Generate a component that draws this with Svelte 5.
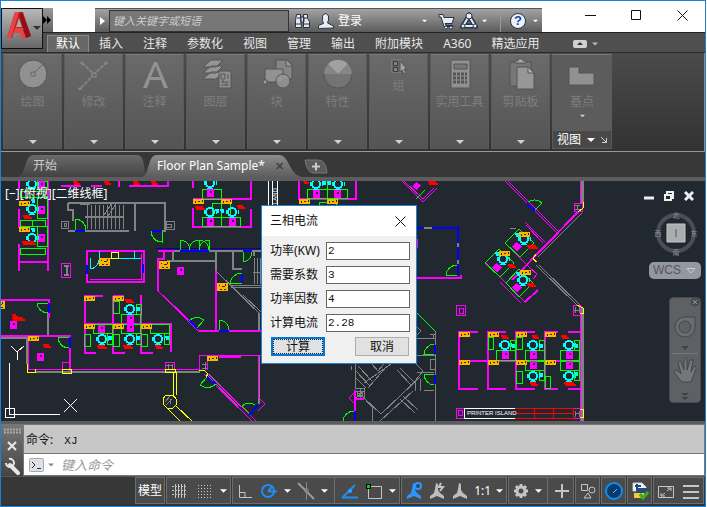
<script lang="ts">
    /**
     * CAD workspace: ribbon, drawing area, current calculator dialog,
     * command line and status bar.
     */
    const tabs = ["插入", "注释", "参数化", "视图", "管理", "输出", "附加模块", "A360", "精选应用"];

    const panels = [
        { name: "绘图", icon: "circle" },
        { name: "修改", icon: "modify" },
        { name: "注释", icon: "text" },
        { name: "图层", icon: "layers" },
        { name: "块", icon: "block" },
        { name: "特性", icon: "props" },
        { name: "组", icon: "group" },
        { name: "实用工具", icon: "calc" },
        { name: "剪贴板", icon: "clip" },
    ];

    let power = $state("2");
    let demand = $state("3");
    let factor = $state("4");
    let result = $state("2.28");
    let search = $state("");
    let command = $state("");

    function calculate() {
        const kw = Number(power) * Number(demand);
        result = (kw / (1.732 * 0.38 * Number(factor))).toFixed(2);
    }

    // drawing entities, in drawing units
    const cabinets = [
        [38, 181], [38, 206], [38, 234], [207, 189], [207, 218], [229, 218],
        [177, 267], [10, 321], [37, 353], [127, 315], [98, 325], [127, 324],
        [313, 190], [334, 190], [502, 351], [530, 351], [566, 351], [530, 361],
        [566, 361],
    ];

    const chairs = [
        [32, 209], [32, 238], [32, 184], [210, 183], [210, 212], [232, 212],
        [130, 309], [102, 339], [130, 339], [158, 339], [316, 184], [338, 184],
        [505, 345], [533, 345], [569, 345], [533, 376], [569, 376],
        [524, 239], [503, 259], [523, 280],
    ];

    const tails = [
        [217, 211], [222, 211], [138, 309], [110, 338], [138, 338], [167, 338],
        [324, 183], [329, 183], [513, 346], [541, 346], [576, 346], [541, 375],
        [576, 374], [517, 235], [497, 254], [518, 274], [33, 230], [33, 201],
    ];

    const files = [
        [19, 201], [19, 227], [193, 199], [221, 199], [84, 296], [113, 296],
        [84, 324], [113, 324], [141, 324], [28, 336], [207, 356], [299, 199],
        [327, 199], [459, 332], [488, 332], [516, 332], [545, 332], [459, 360],
        [488, 360], [516, 360], [545, 360], [519, 232], [499, 251], [520, 270],
    ];

    const labels = [
        [23, 215, 9], [22, 241, 14], [73, 181, 7], [104, 181, 7], [133, 181, 7],
        [151, 181, 7], [195, 206, 10], [237, 205, 8], [125, 299, 9], [97, 345, 10],
        [123, 345, 10], [155, 345, 8], [12, 314, 6], [12, 317, 13], [43, 344, 8],
        [303, 180, 6], [428, 181, 10], [527, 245, 11], [508, 264, 8], [527, 283, 9],
        [501, 335, 8], [532, 335, 7], [561, 335, 8], [530, 382, 8], [564, 382, 12],
    ];

    // x, y, width, height
    const desks = [
        [37, 197, 10, 21], [37, 226, 10, 20], [20, 220, 12, 6], [32, 220, 13, 6],
        [20, 248, 25, 6], [37, 181, 10, 8], [20, 191, 25, 6], [202, 189, 19, 10],
        [202, 217, 19, 9], [221, 217, 19, 9], [212, 203, 18, 14], [113, 301, 6, 12],
        [84, 334, 6, 12], [113, 334, 6, 12], [141, 334, 6, 12], [121, 314, 19, 10],
        [93, 324, 19, 9], [121, 324, 19, 9], [150, 324, 19, 9], [136, 304, 5, 10],
        [107, 333, 5, 11], [136, 333, 5, 11], [164, 333, 5, 11], [307, 189, 20, 9],
        [327, 189, 20, 9], [319, 202, 17, 4], [488, 337, 5, 12], [516, 337, 6, 12],
        [516, 371, 6, 12], [545, 376, 5, 12], [496, 350, 19, 10], [525, 350, 19, 10],
        [560, 350, 19, 10], [525, 361, 19, 9], [560, 361, 19, 9], [510, 340, 5, 10],
        [539, 340, 5, 10], [574, 340, 5, 10], [539, 370, 5, 10], [574, 370, 5, 10],
    ];
</script>

{#snippet arrow()}
    <svg class="arrow" viewBox="0 0 8 4" width="8" height="4"><path d="M0 0h8L4 4z" fill="currentColor" /></svg>
{/snippet}

{#snippet panelIcon(name: string)}
    {@const height = name === "group" ? 16 : 32}
    <svg viewBox="0 0 32 {height}" width="32" {height} fill="none" stroke="#555">
        {#if name === "circle"}
            <circle cx="16" cy="16" r="14" fill="#919191" />
            <path d="M17 15l9-9M14 14h4v4h-4z" stroke="#666" />
        {:else if name === "modify"}
            <path d="M4 5l12 11L28 5M16 16L2 31" stroke="#828282" stroke-width="2" stroke-dasharray="4 1" />
            <path d="M3 4h2v2H3zM27 4h2v2h-2zM1 30h2v2H1zM14 15h4v4h-4z" stroke="#8d8d8d" fill="#666" />
        {:else if name === "text"}
            <path d="M4 30L15 4h3l11 26h-4l-3-8H11l-3 8zM12 19h9L16.500 8z" fill="#929292" fill-rule="evenodd" stroke="none" />
        {:else if name === "layers"}
            <path d="M3 21l8-7h12l-7 7zM3 15l8-7h12l-7 7zM3 9l8-7h12l-7 7z" fill="#969696" />
            <path d="M19 13h12v17H19z" fill="#909090" />
            <path d="M21 16h4v5h-4zM28 16v5M21 24h8M21 27h8M23 22v3M26 25v3" />
        {:else if name === "block"}
            <path d="M15 2h11l5 5v14H15z" fill="#858585" />
            <path d="M25 2v6h6" fill="#9c9c9c" />
            <path d="M4 11h18v13H4z" fill="#929292" />
            <circle cx="22" cy="23" r="7" fill="#999" fill-opacity=".8" />
            <path d="M2 22h4v4H2z" fill="#999" />
        {:else if name === "props"}
            <circle cx="16" cy="16" r="14" fill="#747474" />
            <path d="M16 16L6 6a14 14 0 0 1 20 0z" fill="#a1a1a1" stroke="none" />
            <path d="M16 16l10-10a14 14 0 0 1 4 10zM16 16H2A14 14 0 0 1 6 6z" fill="#868686" stroke="none" />
        {:else if name === "group"}
            <path d="M8.500 1.500h9v13h-9z" stroke="#8a8a8a" stroke-dasharray="1 1" />
            <path d="M10.500 3.500h4v4h-4zM10.500 9.500h4v4h-4z" stroke="#3c3c3c" fill="#858585" />
            <path d="M17 3v11l2-2 2 4 2-1-2-4h3z" fill="#a2a2a2" />
        {:else if name === "calc"}
            <path d="M7 2h19v28H7z" fill="#919191" />
            <path d="M10 6h13v5H10z" fill="#777" />
            <path d="M9 16h14M9 20h14M9 24h14" stroke-width="3" stroke-dasharray="3 1" />
        {:else if name === "clip"}
            <path d="M5 4h21v24H5z" fill="#777" />
            <path d="M10 5V3h3V1h5v2h3v2z" fill="#aaa" />
            <path d="M12 9h11l6 6v16H12z" fill="#979797" />
            <path d="M23 9v6h6z" fill="#b0b0b0" />
        {:else if name === "base"}
            <path d="M3 9h10v6h15v12H3z" fill="#919191" />
        {/if}
    </svg>
{/snippet}

{#snippet statusIcon(name: string)}
    <svg viewBox="0 0 18 18" width="18" height="18" fill="none" stroke="#c5c5c5">
        {#if name === "grid"}
            <path d="M5.500 2v14M8.500 2v14M11.500 2v14M14.500 2v14" />
            <path d="M2 4.500h15M2 8.500h15M2 12.500h15" stroke-dasharray="2 1" />
        {:else if name === "snap"}
            <path d="M3 3.500h14M3 6.500h14M3 9.500h14M3 12.500h14M3 15.500h14" stroke-dasharray="1 2" />
        {:else if name === "ortho"}
            <path d="M3.500 3v12.500H16M4 10.500h5V15" />
        {:else if name === "polar"}
            <g stroke="#218cf0"><circle cx="8" cy="9" r="6" stroke-width="2" /><path d="M8 9.500h9M8 9l5-5" stroke-width="2" /></g>
        {:else if name === "iso"}
            <path d="M1 1l16 16" stroke-width="2" stroke="#999" /><path d="M9.500 0v18M8 7h3v3H8z" stroke="#888" />
        {:else if name === "track"}
            <path d="M1 15.500h16M2 15L14 3" stroke="#218cf0" stroke-width="2" /><circle cx="9" cy="9" r="2" fill="#35a2ff" stroke="none" />
        {:else if name === "osnap"}
            <path d="M3.500 4.500h13v12h-13z" /><path d="M1.500 2.500h4v4h-4z" fill="#0c2" stroke="#000" />
        {:else if name === "anno" || name === "auto" || name === "scale"}
            <path d="M8 1l2 1v6l2 3 4 3v3l-7-3-7 3v-3l4-3 1-4z" fill={name === "anno" ? "#2c96ff" : "#bdbdbd"} stroke="none" />
            {#if name === "anno"}<circle cx="13" cy="4" r="3" stroke="#2c96ff" stroke-width="2" fill="#294664" />{/if}
            {#if name === "auto"}<path d="M13 1l-2 4h4l-3 4" stroke-width="2" />{/if}
        {:else if name === "gear"}
            <circle cx="9" cy="9" r="4" stroke-width="3" /><path d="M9 2v3M9 13v3M2 9h3M13 9h3M4 4l2 2M12 12l2 2M14 4l-2 2M4 14l2-2" stroke-width="3" />
        {:else if name === "plus"}
            <path d="M2 9h14M9 2v14" stroke-width="2" />
        {:else if name === "shapes"}
            <path d="M2.500 2.500h6v6h-6zM9 11l3 5H5z" /><circle cx="13" cy="8" r="3" />
        {:else if name === "disc"}
            <circle cx="9" cy="9" r="8" fill="#063b70" stroke="#168cec" stroke-width="2" /><path d="M8 11l4-4" stroke="#8bbce8" />
        {:else if name === "file"}
            <path d="M2 1h9l4 4v4H2z" fill="#f4f4f4" stroke="#ccc" /><path d="M5 6h11v5H5z" fill="#234d7d" stroke="none" /><path d="M3 11h10v5H3z" fill="#f4ca35" stroke="none" /><path d="M4 4h6M6 2v5" stroke="#1b4884" stroke-width="2" /><path d="M9 12l3 4 5-6" stroke="#3aae16" stroke-width="3" />
        {:else if name === "full"}
            <path d="M1.500 4.500h15v11h-15z" /><path d="M10 9l4-3m0 3V6h-4M8 11l-4 3m0-3v3h4" />
        {:else if name === "menu"}
            <path d="M1 4h16M1 10h16M1 16h16" stroke-width="2" />
        {/if}
    </svg>
{/snippet}

<div class="app">
    <header>
        <button class="app-btn" aria-label="Application menu">
            <svg viewBox="0 0 26 30" width="26" height="30">
                <path d="M1 28L9 2h8l8 24-5 2-3-7H8l-2 7z" fill="#c32028" />
                <path d="M10 17l3-9 3 9z" fill="#aaa" />
                <path d="M9 2h4L5 28H1zM17 21l3 7-4 1-2-6H8l1-5h9z" fill="#e94343" />
                <path d="M16 2l-3 3 7 23 5-2z" fill="#8e1018" />
            </svg>
            {@render arrow()}
        </button>
        <div class="title-row">
            <button class="quick" aria-label="Quick access"><svg viewBox="0 0 8 8" width="8" height="8"><path d="M0 0l4 4-4 4zM4 0l4 4-4 4z" /></svg></button>
            <div class="info-center">
                <svg viewBox="0 0 5 8" width="5" height="8"><path d="M0 0l5 4-5 4z" fill="#fff" /></svg>
                <input class="search" placeholder="键入关键字或短语" aria-label="Search" bind:value={search} />
                <svg viewBox="0 0 18 18" width="18" height="18" fill="#e5e8ec" stroke="#283246">
                    <path d="M3.500 2.500h4v4l1 9h-6v-7zM10.500 2.500h4v4l2 3v6h-6zM8 5h3v5H8z" /><path d="M2 12h6M11 12h5M4 6h3M11 6h3" />
                </svg>
                <button class="login">
                    <svg viewBox="0 0 18 18" width="18" height="18" fill="#e8edf3" stroke="#26344b">
                        <path d="M1.500 16.500v-3l5-2-1-3V4q3-5 6 0v4l-1 3 6 3v2z" />
                    </svg>
                    登录
                    <span>{@render arrow()}</span>
                </button>
                <svg viewBox="0 0 18 18" width="18" height="18" fill="#e8edf3" stroke="#26344b">
                    <path d="M1 2.500h4l1 3h10l-2 6H7l1 2h7v1H6L3 5H1z" /><circle cx="8" cy="15.500" r="1.500" /><circle cx="13" cy="15.500" r="1.500" />
                </svg>
                <svg viewBox="0 0 18 18" width="18" height="18" fill="none" stroke="#26344b">
                    <path d="M9 4L3 14h12z" stroke-width="5" /><path d="M9 4L3 14h12z" stroke="#e8edf3" stroke-width="2" />
                    <g fill="#e8edf3"><circle cx="9" cy="4" r="3" /><circle cx="3" cy="14" r="2" /><circle cx="15" cy="14" r="2" /></g>
                </svg>
                {@render arrow()}
                <button class="help" aria-label="Help"><span>?</span></button>
                {@render arrow()}
            </div>
            <div class="win-btns">
                <button aria-label="Minimize"><svg viewBox="0 0 11 11" width="11" height="11"><path d="M0 5.500h11" /></svg></button>
                <button aria-label="Maximize"><svg viewBox="0 0 11 11" width="11" height="11"><path d="M.5.5h9v9h-9z" /></svg></button>
                <button aria-label="Close"><svg viewBox="0 0 11 11" width="11" height="11"><path d="M.5.5l10 10M10.500.5l-10 10" /></svg></button>
            </div>
        </div>
        <nav class="ribbon-tabs">
            <button class="active">默认</button>
            {#each tabs as tab}
                <button>{tab}</button>
            {/each}
            <svg class="toggle" viewBox="0 0 14 8" width="14" height="8"><rect width="14" height="8" rx="2" fill="#d0d0d0" /><path d="M4 5h6L7 2z" fill="#333" /></svg>
            {@render arrow()}
        </nav>
    </header>

    <section class="ribbon">
        {#each panels as panel}
            <button class="panel">
                {@render panelIcon(panel.icon)}
                <span>{panel.name}</span>
                {@render arrow()}
            </button>
        {/each}
        <div class="panel view">
            {@render panelIcon("base")}
            <span>基点</span>
            {@render arrow()}
            <button class="view-title">
                视图 {@render arrow()}
                <svg viewBox="0 0 6 6" width="6" height="6" fill="none" stroke="#ccc"><path d="M0 0l5 5M5.500 1v4.500H1" /></svg>
            </button>
        </div>
    </section>

    <nav class="doc-tabs">
        <button class="doc start">
            <svg viewBox="0 0 128 22" preserveAspectRatio="none"><path d="M0 22C8 20 6 0 16 0h102c9 0 7 10 10 22z" fill="url(#tab-off)" /></svg>
            <span>开始</span>
        </button>
        <button class="doc current">
            <svg viewBox="0 0 162 22" preserveAspectRatio="none"><path d="M0 22C8 20 5 0 15 0h122c11 0 10 22 25 22z" fill="url(#tab-on)" /></svg>
            <span>Floor Plan Sample*</span><b>✕</b>
        </button>
        <button class="doc-add" aria-label="New drawing">
            <svg viewBox="0 0 24 15" width="24" height="15"><path d="M1 1h13q8 0 9 13H10Q3 14 1 1z" fill="#5a5a5a" stroke="#777" /><path d="M8 7.500h8M12 3.500v8" stroke="#ccc" stroke-width="2" /></svg>
        </button>
        <svg width="0" height="0">
            <linearGradient id="tab-off" x2="0" y2="1"><stop stop-color="#6a6a6a" /><stop offset="1" stop-color="#424242" /></linearGradient>
            <linearGradient id="tab-on" x2="0" y2="1"><stop stop-color="#8c8c8c" /><stop offset="1" stop-color="#5d5d5d" /></linearGradient>
        </svg>
    </nav>

    <main>
        <svg class="drawing" viewBox="1 181 704 240" preserveAspectRatio="xMinYMin slice" fill="none" shape-rendering="crispEdges">
            <!-- grey walls, stairs and columns -->
            <g stroke="#828282" stroke-width="2">
                <path d="M68 203H165V231H152M129 231H85M75 231H68M68 203V210H73V221M135 203V231M85 216.500H124M80 204H90" />
                <path d="M173 251H261M173 251V261M167 261H216V251M216 251V271M233 251V269H242M254 251V256" />
                <path d="M35 372H200M1 338H27M27 337V364M48 313V335M259 313V331M259 356V404" />
                <path d="M64 266H69M66.500 266V275M64 275H69" />
                <path d="M510 228H516M435 331V421M417 338H435M417 355H435M417 372H434" stroke-width="1" />
                <path d="M430 359H435V369H430zM430 334H436M433 334V338M430 338H436M417 327L421 331 417 335" stroke-width="1" />
                <path d="M582.500 181V203M582.500 308V421" stroke-width="3" />
                <path d="M574 310H580M575 307V313M579 307V313M575 413H580M575 411V417M579 411V417M575 205H580M577 205V209M575 209H580" stroke-width="1" />
                <path d="M202 364H207M202 368H207M205 362V370M166 365H173M168 364V369M172 364V369" stroke-width="1" />
            </g>
            <g stroke="#828282">
                {#each [87, 91, 95, 99, 103, 107, 111, 115, 119, 123] as x}
                    <path d="M{x} 205V229" />
                {/each}
                <path d="M104 215L112 203M108 216L116 204M61 221H68V228H61zM64 223H66V226H64zM166 221H174V229H166zM166 224H171V227H166M254 258V284M257 258V284M260 258V284M253 272H261M231 285H261M231 287H261" />
                <path d="M217 272L246 300M227 282L246 300M240 295L260 314M243 295L261 312" />
                <path d="M206 374L252 421M209 374L256 421M212 377L258 423" />
                <path d="M580 211L536 255M582 213L538 257M536 265L580 308M539 265L583 308" />
                <path d="M355 364V388H364V398H355M356 391L364 398M364 391L356 398M360 389V398" />
                <path d="M355 370L370 386M358 366L372 381M368 388L387 366M372 364L378 371 384 364M364 383L391 364M364 398L381 414 420 377M380 421L413 391M400 368L414 382M397 370L411 385M364 398L372 407V421M400 399L415 413M403 396L418 410M415 391V381L423 371 414 362M420 379V387L421 391M424 390H434M351 366V370M356 378L366 388" />
                <circle cx="360" cy="394" r="3" />
                <path d="M165 402L170 396M166 405L172 399M170 404V399" />
            </g>

            <!-- magenta partitions -->
            <g stroke="#f0f" stroke-width="2">
                <path d="M19 181V189M19 209V228M19 244V271M48 181V271M20 262H48" />
                <path d="M61 186H81M91 186H102M119 181V187M129 186H168V181M193 181V188M193 199H251V181M193 208V227H251V209" />
                <path d="M158 251H174M164 251V259H158V291M216 271V331M85 296V353H96M84 296H103M113 296H124M113 296V353H125M141 295V353H153M84 324H171V352" />
                <path d="M87 251H144V282H87zM199 331H261M1 300H49V318M1 336H70V371M85 335" />
                <path d="M299 181V199H356V181M417 278H461V275M355 390V421M355 399H364M417 239V248M219 357H241" />
                <path d="M580 181V203M580 308V421" stroke-width="1" />
                <path d="M459 332V389M488 332V389M516 332V389M545 332V389M458 332H478M487 332H506M515 332H535M544 332H558M568 332H580M458 361H580M458 389H478M487 389H506M515 389H535M544 389H558M568 389H580" />
                <path d="M579 211L512 280M525 302L538 290" />
            </g>
            <g stroke="#f0f">
                <path d="M90 279H141V254M61 263H70V277H61zM158 291L199 332M163 295L200 331M28 369H200M28 336V369M62 369V362H69V369M165 369V362H174V369M199 370V355H261M207 370V357M258 356V397L265 404 258 411" />
                <path d="M206 372L256 421M204 374L252 421M355 392L349 398 355 404M402 181L423 202 437 188M404 181L423 199 434 188" />
                <path d="M505 181L557 233M508 181L559 232M525 222L545 242M526 225L543 243M485 262L525 302M505 243L530 268M500 282L521 303M574 203H582V211H574zM456 305H465V315H456zM459 308H463V313H459zM573 305H580V315H573zM456 408H464V418H456zM458 410H462V415H458zM573 408H580V418H573zM530 268L537 274 533 279" />
            </g>

            <!-- blue door openings -->
            <g stroke="#00f" stroke-width="2">
                <path d="M75 231H85M151 231H162M180 251H209M87 265V274M143 264V273M243 251H252M242 273V283M49 303V313M70 337V348M189 320L198 329M219 331H229M249 415L258 405M417 228H458V275M435 345V354M435 375V384M355 411V421M527 204L535 211M207 377L216 385" />
                <path d="M156 248.500H261" stroke="#0000a8" stroke-width="1" />
            </g>
            <path d="M424 228H432M458 243V247M458 260V264" stroke="#828282" stroke-width="2" />

            <!-- door swings and desks -->
            <g stroke="#0f0">
                <path d="M75 230V219A11 11 0 0 1 86 230M162 231V242A11 11 0 0 1 151 231M180 250V240A10 10 0 0 1 190 250M199 240A10 10 0 0 0 189 250M199 250V240A10 10 0 0 1 209 250V240A10 10 0 0 0 199 250" />
                <path d="M243 262V252M252 252A10 10 0 0 1 243 262M242 283H230A12 12 0 0 1 242 273M37 303H48M37 303A11 11 0 0 0 48 313M58 337H69M58 337A11 11 0 0 0 69 348" />
                <path d="M189 321A11 11 0 0 1 204 320L197 328M219 330V320A10 10 0 0 1 229 330M207 377L200 385A12 12 0 0 0 216 384M249 413L242 406A10 10 0 0 1 255 405" />
                <path d="M434 344A11 11 0 0 0 424 354H434M424 374H434M424 374A11 11 0 0 0 434 385M343 421A11 11 0 0 1 354 411M446 275H457M446 275A11 11 0 0 1 457 265M417 313L435 331M528 202A11 11 0 0 1 542 203L535 210M327 181V199M221 203V226M416 199L425 190" />
                <path d="M519 229L505 243 520 257 534 243zM499 249L485 263 500 277 514 263zM519 269L506 283 519 297 533 283z" />
                {#each desks as [x, y, w, h]}
                    <rect {x} {y} width={w} height={h} />
                {/each}
            </g>

            {#each cabinets as [x, y]}
                <path d="M{x} {y}h7v8h-7zM{x + 3} {y + 2}v2h2v-2z" fill="#f0f" fill-rule="evenodd" />
            {/each}
            <path d="M516 242l6 4-5 6-5-6zM496 263l6 4-5 6-5-6zM516 283l6 4-5 6-5-6zM416 182l5 3-5 5-3-4z" fill="#f0f" />
            {#each chairs as [x, y]}
                <circle cx={x} cy={y} r="4" stroke="#0ff" stroke-width="2" />
                <path d="M{x - 6} {y - 2}v4M{x + 6} {y - 2}v4M{x - 3} {y + 5}h6" stroke="#0ff" />
            {/each}
            {#each tails as [x, y]}
                <path d="M{x - 2} {y - 2}h4v4h-3z" fill="#0ff" />
            {/each}
            <path d="M102 258H141M99 251V260M134 251V258M90 258V269A10 10 0 0 0 99 260" stroke="#0ff" />

            {#each files as [x, y]}
                <path d="M{x} {y}h11v5h-11z" fill="#ffb400" />
                <path d="M{x + 2} {y + 2}v2M{x + 5} {y + 2}h2M{x + 9} {y + 1}v2" stroke="#30302a" />
            {/each}
            {#each [[99, 258], [159, 261], [217, 283], [-6, 301]] as [x, y]}
                <path d="M{x} {y}h11v8h-11z" fill="#ffb400" />
                <path d="M{x + 2} {y + 2}h1M{x + 5} {y + 3}h3M{x + 8} {y + 1}v2M{x + 3} {y + 6}h2M{x + 7} {y + 6}h2" stroke="#30302a" />
            {/each}
            {#each labels as [x, y, w]}
                <path d="M{x} {y + 1}h{w - 2}M{x + 1} {y + 3}h{w - 1}" stroke="red" stroke-width="2" />
            {/each}

            <path d="M111 252H118V258H111zM27 364V372H35V369M62 369H71V373H62zM165 369H175V372H165zM173 372V395M176 372V395M166 395H173L176 399V405L173 408H167L163 404V399zM167 408L181 422M175 405L193 422M199 370H204L208 374 206 377M583 202V208L578 212M536 254L533 259 537 262M577 305L583 308V313H580M580 409H583V417H580" stroke="#ff0" />

            <!-- printer island -->
            <path d="M515 408H573V418H515M515 413H573M534 408V418M553 408V418" stroke="red" />
            <path d="M515 408H464V418H515M268 181V205M272 181V205M277 181V205" stroke="#fff" />
            <text x="467" y="415" class="tag">PRINTER ISLAND</text>
            <text transform="translate(277 204) rotate(-90)" class="tag">LAND</text>

            <!-- UCS icon -->
            <path d="M9.500 363V414.500H60M5 408H14V417H5zM64 399L77 412M77 399L64 412M11 346L17 352 24 346M17.500 352V360" stroke="#fff" />
        </svg>

        <div class="viewport-label">[−][俯视][二维线框]</div>

        <div class="nav-tools">
            <div class="mdi">
                <button aria-label="Minimize drawing"><svg viewBox="0 0 10 10" width="10" height="10"><path d="M0 7h10" stroke-width="3" /></svg></button>
                <button aria-label="Restore drawing"><svg viewBox="0 0 10 10" width="10" height="10" fill="none"><path d="M3 3V1h6v6H7M1 4h6v5H1z" stroke-width="2" /></svg></button>
                <button aria-label="Close drawing"><svg viewBox="0 0 10 10" width="10" height="10"><path d="M1 1l8 8M9 1L1 9" stroke-width="3" /></svg></button>
            </div>
            <svg class="cube" viewBox="0 0 44 46" width="44" height="46">
                <circle cx="22" cy="23" r="18" fill="none" stroke="#484e55" stroke-width="4" />
                <path d="M13 14h18v18H13z" fill="#a9adae" stroke="#c3c6c7" />
                <path d="M22 19v8" stroke="#555" />
                <g fill="#8f9499" font-size="7" text-anchor="middle">
                    <text x="22" y="8">北</text><text x="22" y="45">南</text><text x="4" y="26">西</text><text x="40" y="26">东</text>
                </g>
            </svg>
            <button class="wcs">WCS <svg viewBox="0 0 10 6" width="10" height="6" fill="none" stroke="#ccc"><path d="M1 .5h8L5 5z" /></svg></button>
            <svg class="navbar" viewBox="0 0 32 106" width="32" height="106" fill="none" stroke="#42464a">
                <rect x=".5" y=".5" width="31" height="105" rx="4" fill="#5d6163" stroke="#484c50" />
                <circle cx="26" cy="5" r="4" fill="#4c5053" /><path d="M24 3l4 4M28 3l-4 4" stroke="#8b8e91" />
                <path d="M16 20H26V30a10 10 0 1 1-10-10z" fill="#6a6e71" /><circle cx="16" cy="30" r="6" fill="#5d6163" />
                <path d="M12 49h8l-4 4z" fill="#3e4246" stroke="none" /><path d="M3 56.500h26" stroke="#747779" />
                <path d="M11 83L5 75q1-3 4-1l3 3-3-12q2-2 3 0l3 8V62q2-2 3 0v11l3-10q3-1 3 1l-2 11 3-6q3 0 2 3l-5 13H13z" fill="#74777a" />
                <path d="M12 96h8l-4 3zM12 100h8l-4 3z" fill="#3e4246" stroke="none" />
            </svg>
        </div>

        <form class="dialog" onsubmit={(e) => e.preventDefault()}>
            <div class="dialog-title">
                三相电流
                <button type="button" aria-label="Close dialog"><svg viewBox="0 0 11 11" width="11" height="11"><path d="M.5.5l10 10M10.500.5l-10 10" stroke="#111" /></svg></button>
            </div>
            <div class="fields">
                <label for="power">功率(KW)</label><input id="power" bind:value={power} />
                <label for="demand">需要系数</label><input id="demand" bind:value={demand} />
                <label for="factor">功率因数</label><input id="factor" bind:value={factor} />
                <label for="result">计算电流</label><input id="result" bind:value={result} />
            </div>
            <div class="actions">
                <button type="button" class="primary" onclick={calculate}><span>计算</span></button>
                <button type="button">取消</button>
            </div>
        </form>
    </main>

    <section class="command">
        <div class="grip">
            <svg viewBox="0 0 22 52" width="22" height="52" fill="none">
                <path d="M3 5.500h17M3 8.500h17" stroke="#aaa" stroke-width="2" stroke-dasharray="2 1" />
                <path d="M7 18l8 8M15 18l-8 8" stroke="#e8e8e8" stroke-width="2" />
                <path d="M9 41l8 8" stroke="#e8e8e8" stroke-width="4" stroke-linecap="round" />
                <path d="M8 35a4 4 0 1 1-3 4" stroke="#e8e8e8" stroke-width="2" />
            </svg>
        </div>
        <div class="console">
            <output>命令: <span>XJ</span></output>
            <div class="prompt">
                <svg viewBox="0 0 15 14" width="15" height="14" fill="none"><rect x=".5" y=".5" width="14" height="13" rx="1" fill="#dde2e7" stroke="#a5a9ad" /><path d="M3 4l3 3-3 3M8 10.500h4" stroke="#333" /></svg>
                {@render arrow()}
                <input placeholder="键入命令" aria-label="Command" bind:value={command} />
            </div>
        </div>
    </section>

    <footer>
        <div class="group g-model"><button>模型</button></div>
        <div class="group g-grid">{@render statusIcon("grid")}{@render statusIcon("snap")}{@render arrow()}</div>
        <div class="group g-draft">{@render statusIcon("ortho")}{@render statusIcon("polar")}{@render arrow()}{@render statusIcon("iso")}{@render arrow()}<i></i>{@render statusIcon("track")}{@render statusIcon("osnap")}{@render arrow()}</div>
        <div class="group g-anno">{@render statusIcon("anno")}{@render statusIcon("auto")}{@render statusIcon("scale")}<span>1:1</span>{@render arrow()}</div>
        <div class="group g-gear">{@render statusIcon("gear")}{@render arrow()}<i></i>{@render statusIcon("plus")}</div>
        <div class="group">{@render statusIcon("shapes")}</div>
        <div class="group">{@render statusIcon("disc")}</div>
        <div class="group">{@render statusIcon("file")}</div>
        <div class="group g-menu">{@render statusIcon("full")}{@render statusIcon("menu")}</div>
    </footer>
</div>

<style>
    :global(body) {
        margin: 0;
        background: #fff;
    }

    .app {
        box-sizing: border-box;
        display: flex;
        flex-direction: column;
        height: 100vh;
        margin-right: 1px;
        border: 1px solid #1883d7;
        background: #3a3a3a;
        color: #e6e6e6;
        font: 12px/16px "Noto Sans", "Noto Sans CJK SC", sans-serif;
        overflow: hidden;
    }

    button,
    input {
        box-sizing: border-box;
        margin: 0;
        padding: 0;
        border: 0;
        background: none;
        color: inherit;
        font: inherit;
        white-space: nowrap;
    }

    svg {
        flex-shrink: 0;
    }

    header {
        display: grid;
        grid-template-columns: 42px 1fr;
        grid-template-rows: 31px 21px;
        background: #fff;
    }

    .app-btn {
        grid-area: 1 / 1 / 3 / 2;
        z-index: 1;
        height: 41px;
        margin-top: 7px;
        display: flex;
        padding: 1px 0 0 4px;
        align-items: flex-start;
        gap: 1px;
        border: 1px solid #111;
        background: linear-gradient(#b8b8b8, #686868);
        color: #2c3440;
    }

    .app-btn .arrow {
        margin-top: 16px;
    }

    .title-row {
        grid-area: 1 / 2;
        display: flex;
    }

    .quick {
        width: 10px;
        height: 24px;
        margin-top: 7px;
        background: linear-gradient(#999, #626262);
        display: flex;
        align-items: center;
    }

    .info-center {
        flex: 0 1 447px;
        box-sizing: border-box;
        height: 24px;
        margin: 7px 0 0 42px;
        padding: 0 4px 0 5px;
        display: flex;
        align-items: center;
        gap: 4px;
        border-top: 1px solid #555;
        background: linear-gradient(#a3a3a3, #5b5b5b);
        color: #fff;
    }

    .info-center .arrow {
        width: 5px;
    }

    .search {
        width: 180px;
        height: 22px;
        padding: 0 3px;
        border: 1px solid #333;
        background: #777;
        font-size: 11px;
        font-style: italic;
    }

    .search::placeholder {
        color: #ccc;
    }

    .login {
        flex: 1;
        display: flex;
        align-items: center;
        gap: 3px;
        padding-left: 2px;
    }

    .login span {
        display: flex;
        margin: 0 7px 0 auto;
    }

    .help {
        height: 22px;
        margin-left: 9px;
        padding: 0 3px 0 9px;
        border-left: 1px solid #999;
    }

    .help span {
        display: block;
        width: 14px;
        border: 1px solid #26344b;
        border-radius: 50%;
        background: #eef2f6;
        color: #1546b0;
        font: bold 13px/14px "Liberation Sans", sans-serif;
    }

    .win-btns {
        flex: 1;
        display: flex;
        justify-content: flex-end;
    }

    .win-btns button {
        width: 46px;
        height: 28px;
    }

    .win-btns svg {
        fill: none;
        stroke: #111;
        vertical-align: middle;
    }

    .ribbon-tabs {
        grid-area: 2 / 1 / 3 / 3;
        display: flex;
        align-items: center;
        padding: 2px 0 0 46px;
        border-top: 1px solid #222;
        border-bottom: 1px solid #2c2c2c;
        background: #4f4f4f;
    }

    .ribbon-tabs button {
        padding: 0 10px;
    }

    .ribbon-tabs .active {
        height: 17px;
        padding: 0 8px;
        border: 1px solid #8a8a8a;
        border-bottom: 0;
        background: #676767;
        color: #fff;
    }

    .toggle {
        margin: 0 5px 0 24px;
    }

    .ribbon-tabs .arrow {
        width: 6px;
        color: #bbb;
    }

    .ribbon {
        box-sizing: border-box;
        height: 99px;
        display: flex;
        gap: 2px;
        padding: 1px 2px 2px;
        border-right: 1px solid #888;
        border-bottom: 1px solid #999;
        background: linear-gradient(#4b4b4b, #323232);
    }

    .panel {
        box-sizing: border-box;
        width: 59px;
        display: flex;
        flex-direction: column;
        align-items: center;
        padding: 3px 0 4px;
        border: 1px solid #5a5a5a;
        border-top-color: #777;
        background: linear-gradient(#6a6a6a, #545454);
        color: #7e7e7e;
    }

    .panel span {
        margin-top: 4px;
    }

    .panel .arrow {
        margin-top: auto;
        color: #d2d2d2;
    }

    .panel.view {
        width: 60px;
        padding: 3px 0 0;
        background: #5c5c5c;
    }

    .panel.view > .arrow {
        width: 5px;
        margin: 4px 0 auto;
    }

    .view-title {
        align-self: stretch;
        height: 17px;
        display: flex;
        align-items: center;
        justify-content: space-between;
        padding: 0 4px;
        background: #484848;
        color: #fff;
    }

    .view-title .arrow {
        margin: 0;
        color: #fff;
    }

    .doc-tabs {
        height: 25px;
        display: flex;
        align-items: flex-end;
        padding-left: 17px;
        border-bottom: 4px solid #5d5d5d;
        background: #383838;
    }

    .doc {
        display: grid;
        height: 22px;
        align-items: center;
    }

    .doc > * {
        grid-area: 1 / 1;
    }

    .doc > svg {
        width: 100%;
        height: 22px;
    }

    .doc span {
        padding-left: 15px;
        text-align: left;
        color: #ccc;
    }

    .start {
        width: 128px;
    }

    .current {
        width: 162px;
        margin-left: -4px;
    }

    .current span {
        color: #fff;
    }

    .doc b {
        justify-self: end;
        padding-right: 20px;
        color: #444;
        font-size: 11px;
    }

    .doc-add {
        padding-bottom: 3px;
    }

    .doc-add svg {
        display: block;
    }

    main {
        position: relative;
        flex: 1;
        min-height: 0;
        overflow: hidden;
        background: #212830;
    }

    .drawing {
        display: block;
        width: 100%;
        height: 100%;
    }

    .tag {
        fill: #fff;
        font: 6px/8px "Liberation Sans", sans-serif;
    }

    .viewport-label {
        position: absolute;
        left: 4px;
        top: 5px;
        color: #fff;
    }

    .nav-tools {
        position: absolute;
        top: 9px;
        right: 4px;
        display: flex;
        flex-direction: column;
        align-items: flex-end;
    }

    .mdi {
        display: flex;
        gap: 10px;
        padding-right: 7px;
    }

    .mdi button {
        height: 12px;
    }

    .mdi svg {
        display: block;
        stroke: #eee;
    }

    .cube {
        margin: 8px 3px 6px 0;
    }

    .wcs {
        display: flex;
        align-items: center;
        gap: 5px;
        height: 17px;
        padding: 0 5px 0 4px;
        border-radius: 5px;
        background: #9597a3;
        color: #54565f;
        font: 12px/17px "Liberation Sans", sans-serif;
    }

    .navbar {
        margin-top: 18px;
    }

    .dialog {
        position: absolute;
        left: 260px;
        top: 24px;
        width: 154px;
        border: 1px solid #1883d7;
        background: #f0f0f0;
        color: #111;
    }

    .dialog-title {
        display: flex;
        justify-content: space-between;
        align-items: center;
        height: 30px;
        padding: 0 10px 0 8px;
        background: #fff;
    }

    .dialog-title svg {
        display: block;
    }

    .fields {
        display: grid;
        grid-template-columns: 48px 1fr;
        align-items: center;
        gap: 6px 8px;
        padding: 6px 6px 0 8px;
    }

    .fields label {
        line-height: 18px;
        white-space: nowrap;
    }

    .fields input {
        width: 100%;
        height: 18px;
        padding: 0 1px;
        border: 1px solid #666;
        background: #fff;
        font: 11px/16px "Liberation Mono", monospace;
    }

    .actions {
        display: flex;
        justify-content: space-between;
        padding: 5px 7px 7px 9px;
    }

    .actions button {
        width: 54px;
        height: 19px;
        border: 1px solid #adadad;
        background: #e1e1e1;
        line-height: 16px;
    }

    .actions .primary {
        border: 2px solid #0078d7;
    }

    .primary span {
        display: block;
        box-sizing: border-box;
        height: 15px;
        border: 1px dotted #222;
        line-height: 13px;
    }

    .command {
        display: flex;
        border-top: 3px solid #5d5d5d;
    }

    .grip {
        width: 22px;
        height: 52px;
        background: linear-gradient(#777, #444);
    }

    .console {
        flex: 1;
        display: flex;
        flex-direction: column;
        border: 1px solid #777;
        background: #fff;
        color: #111;
    }

    .console output {
        height: 21px;
        padding: 7px 2px 0;
        border-bottom: 1px solid #777;
        background: #c7c7c7;
    }

    .console output span {
        padding-left: 8px;
        font: 11px/16px "Liberation Mono", monospace;
    }

    .prompt {
        flex: 1;
        display: flex;
        align-items: center;
        gap: 4px;
        padding-left: 5px;
    }

    .prompt .arrow {
        width: 6px;
        color: #888;
    }

    .prompt input {
        flex: 1;
        padding-left: 3px;
        font-size: 13px;
        font-style: italic;
        outline: 0;
    }

    .prompt input::placeholder {
        color: #999;
    }

    footer {
        display: flex;
        justify-content: flex-end;
        gap: 1px;
        height: 27px;
        padding-right: 1px;
        border-top: 1px solid #555;
        border-bottom: 2px solid #333;
        background: #373737;
    }

    .group {
        box-sizing: border-box;
        display: flex;
        align-items: center;
        justify-content: space-around;
        width: 25px;
        border: 1px solid #6d6d6d;
        background: #4a4a4a;
        color: #fff;
    }

    .group .arrow {
        width: 7px;
    }

    .group i {
        align-self: stretch;
        width: 1px;
        background: #6d6d6d;
    }

    .g-model {
        width: 30px;
    }

    .g-grid {
        width: 65px;
    }

    .g-draft {
        width: 168px;
    }

    .g-anno {
        width: 106px;
    }

    .g-gear {
        width: 66px;
    }

    .g-menu {
        width: 51px;
    }
</style>
